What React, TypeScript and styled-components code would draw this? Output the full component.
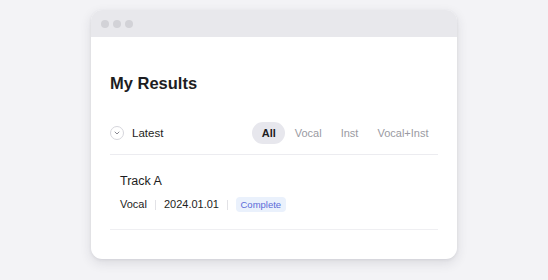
import React from "react";
import styled, { createGlobalStyle } from "styled-components";

const Global = createGlobalStyle`
  html, body { margin: 0; padding: 0; background: #f3f3f6; }
  body { font-family: "Liberation Sans", Arial, sans-serif; }
`;

const Page = styled.div`
  width: 548px;
  height: 280px;
  display: flex;
  justify-content: center;
  padding-top: 10px;
  box-sizing: border-box;
`;

const Window = styled.div`
  width: 366px;
  height: 249px;
  background: #ffffff;
  border-radius: 11px;
  overflow: hidden;
  box-shadow: 0 4px 12px rgba(40, 40, 60, 0.12), 0 1px 3px rgba(40, 40, 60, 0.08);
  display: flex;
  flex-direction: column;
`;

const TitleBar = styled.div`
  height: 27px;
  background: #e8e8ec;
  display: flex;
  align-items: center;
  gap: 4px;
  padding-left: 10px;
  flex-shrink: 0;
`;

const Dot = styled.span`
  width: 8px;
  height: 8px;
  border-radius: 50%;
  background: #d2d2d7;
`;

const Body = styled.div`
  padding: 35px 19px 0 19px;
  display: flex;
  flex-direction: column;
`;

const Heading = styled.h1`
  margin: 0;
  font-size: 16.5px;
  line-height: 22px;
  font-weight: 700;
  color: #1d1d22;
`;

const FilterRow = styled.div`
  margin-top: 28px;
  height: 22px;
  display: flex;
  align-items: center;
  padding-bottom: 10px;
  border-bottom: 1px solid #ececf0;
`;

const SortButton = styled.div`
  display: flex;
  align-items: center;
  gap: 8px;
  font-size: 11.5px;
  color: #1d1d22;
`;

const CircleIcon = styled.span`
  width: 12px;
  height: 12px;
  border: 1px solid #d6d6dc;
  border-radius: 50%;
  display: flex;
  align-items: center;
  justify-content: center;
`;

const Tabs = styled.div`
  margin-left: auto;
  display: flex;
  align-items: center;
  gap: 0;
`;

const Tab = styled.span<{ $active?: boolean }>`
  height: 22px;
  padding: 0 9.5px;
  border-radius: 11px;
  display: flex;
  align-items: center;
  font-size: 11px;
  background: ${(p) => (p.$active ? "#e7e7ed" : "transparent")};
  color: ${(p) => (p.$active ? "#1d1d22" : "#9a9aa2")};
  font-weight: ${(p) => (p.$active ? 700 : 400)};
`;

const Item = styled.div`
  padding: 18px 10px 17px 10px;
  border-bottom: 1px solid #efeff2;
  display: flex;
  flex-direction: column;
  gap: 7px;
`;

const TrackTitle = styled.div`
  font-size: 12.5px;
  line-height: 17px;
  color: #1d1d22;
`;

const Meta = styled.div`
  display: flex;
  align-items: center;
  font-size: 11px;
  line-height: 15px;
  color: #1d1d22;
`;

const Sep = styled.span`
  width: 1px;
  height: 10px;
  background: #e2e2e6;
  margin: 0 8px;
`;

const Badge = styled.span`
  font-size: 9.5px;
  line-height: 15px;
  padding: 0 4.5px;
  border-radius: 4px;
  background: #eaf1fc;
  color: #5b6bd8;
`;

export default function App() {
  return (
    <>
      <Global />
      <Page>
        <Window>
          <TitleBar>
            <Dot />
            <Dot />
            <Dot />
          </TitleBar>
          <Body>
            <Heading>My Results</Heading>
            <FilterRow>
              <SortButton>
                <CircleIcon>
                  <svg width="8" height="8" viewBox="0 0 8 8">
                    <path d="M2 3l2 2 2-2" fill="none" stroke="#8a8a92" strokeWidth="1" strokeLinecap="round" strokeLinejoin="round" />
                  </svg>
                </CircleIcon>
                Latest
              </SortButton>
              <Tabs>
                <Tab $active>All</Tab>
                <Tab>Vocal</Tab>
                <Tab>Inst</Tab>
                <Tab>Vocal+Inst</Tab>
              </Tabs>
            </FilterRow>
            <Item>
              <TrackTitle>Track A</TrackTitle>
              <Meta>
                Vocal
                <Sep />
                2024.01.01
                <Sep />
                <Badge>Complete</Badge>
              </Meta>
            </Item>
          </Body>
        </Window>
      </Page>
    </>
  );
}
